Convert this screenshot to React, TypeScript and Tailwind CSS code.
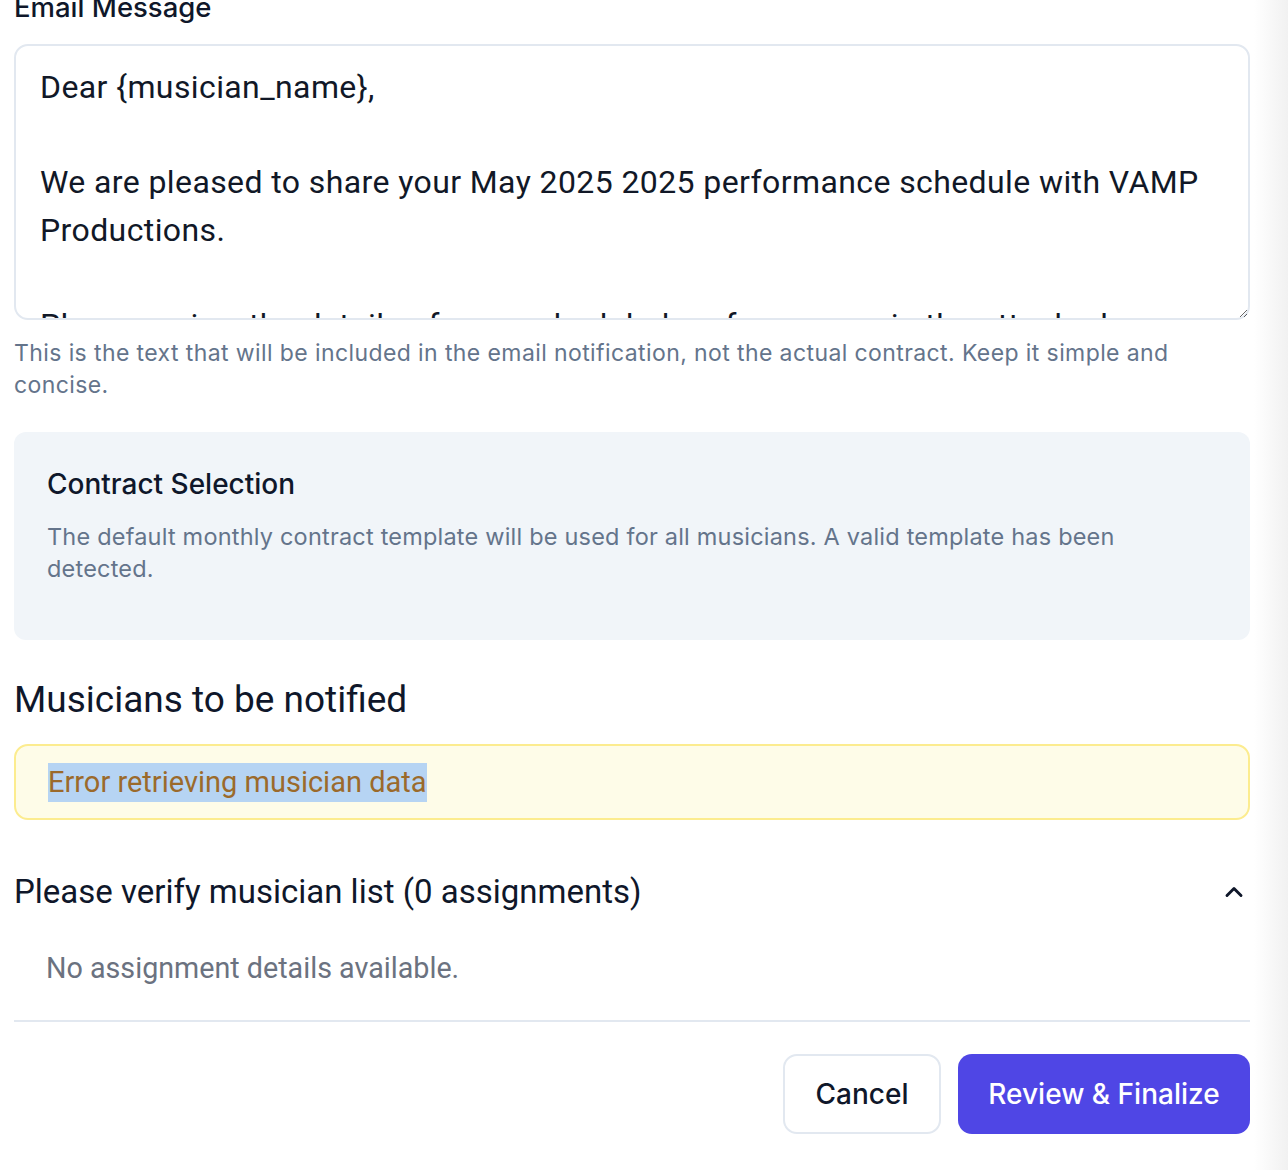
import React from 'react';
import { ChevronUp } from 'lucide-react';

const message = `Dear {musician_name},

We are pleased to share your May 2025 2025 performance schedule with VAMP Productions.

Please review the details of your scheduled performances in the attached contract and confirm your availability.

Best regards,
VAMP Productions`;

export default function App() {
  return (
    <div className="flex min-h-[1170px] overflow-hidden bg-white" style={{ fontFamily: 'Roboto, "Liberation Sans", sans-serif' }}>
      <div className="w-[1254px] shrink-0 pl-[14px] pr-[4px]">
        <label className="-mt-[13px] mb-[17px] block text-[27.5px] font-medium leading-[40px] text-[#0f172a] font-['Inter',sans-serif]">
          Email Message
        </label>
        <textarea
          readOnly
          defaultValue={message}
          className="block h-[276px] w-full resize-y overflow-hidden rounded-[14px] border-2 border-[#e2e8f0] bg-white px-6 py-[18px] text-[32px] leading-[47.5px] tracking-[0.4px] text-[#111827] outline-none"
        />
        <p className="mt-[17px] font-['Inter',sans-serif] text-[23px] leading-[32px] tracking-[0.4px] text-[#64748b]">
          This is the text that will be included in the email notification, not the actual contract. Keep it simple and concise.
        </p>

        <div className="mt-[31px] rounded-[12px] bg-[#f1f5f9] px-[33px] pt-[32px] pb-[55px] font-['Inter',sans-serif]">
          <h3 className="text-[28px] font-medium leading-[40px] text-[#0f172a]">Contract Selection</h3>
          <p className="mt-[17px] text-[23.5px] leading-[32px] tracking-[0.2px] text-[#64748b]">
            The default monthly contract template will be used for all musicians. A valid template has been detected.
          </p>
        </div>

        <h2 className="mt-[36px] text-[37px] font-normal leading-[48px] text-[#0f172a]">Musicians to be notified</h2>

        <div className="mt-[20px] flex h-[76px] items-center rounded-[14px] border-2 border-[#fcec8f] bg-[#fefce8] px-[32px]">
          <span className="bg-[#b6d4f3] text-[29px] leading-[39px] text-[#9b6a2b]">Error retrieving musician data</span>
        </div>

        <div className="mt-[48px] flex items-center justify-between">
          <h3 className="text-[33px] font-normal leading-[48px] text-[#0f172a]">Please verify musician list (0 assignments)</h3>
          <ChevronUp className="mr-[2px] h-[28px] w-[28px] text-[#0f172a]" strokeWidth={2.5} />
        </div>

        <p className="mt-[32px] pl-[32px] text-[28.7px] leading-[40px] text-[#6b7280]">No assignment details available.</p>

        <div className="mt-[32px] h-[2px] bg-[#e2e8f0]" />

        <div className="mt-[32px] flex justify-end gap-[17px] font-['Inter',sans-serif]">
          <button className="h-[80px] w-[158px] rounded-[14px] border-2 border-[#e2e8f0] bg-white text-[28px] font-medium text-[#0f172a]">
            Cancel
          </button>
          <button className="h-[80px] w-[292px] rounded-[14px] bg-[#4f46e5] text-[28px] font-medium text-white">
            Review &amp; Finalize
          </button>
        </div>
      </div>
      <div className="flex-1 bg-gradient-to-r from-white to-[#f1f1f1]" />
    </div>
  );
}
